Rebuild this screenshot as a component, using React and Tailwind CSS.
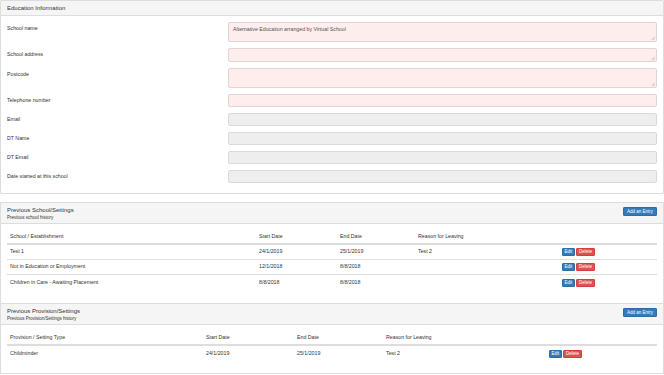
import React from 'react';

const fields = [
    { label: 'School name', h: 'h-[20px]', tone: 'pink', value: 'Alternative Education arranged by Virtual School', grip: true },
    { label: 'School address', h: 'h-[14px]', tone: 'pink', grip: true },
    { label: 'Postcode', h: 'h-[20px]', tone: 'pink', grip: true },
    { label: 'Telephone number', h: 'h-[13px]', tone: 'pink' },
    { label: 'Email', h: 'h-[13px]', tone: 'gray' },
    { label: 'DT Name', h: 'h-[13px]', tone: 'gray' },
    { label: 'DT Email', h: 'h-[13px]', tone: 'gray' },
    { label: 'Date started at this school', h: 'h-[13px]', tone: 'gray' },
];

const schools = [
    { name: 'Test 1', start: '24/1/2019', end: '25/1/2019', reason: 'Test 2' },
    { name: 'Not in Education or Employment', start: '12/1/2018', end: '8/8/2018', reason: '' },
    { name: 'Children in Care - Awaiting Placement', start: '8/8/2018', end: '8/8/2018', reason: '' },
];

const provisions = [
    { name: 'Childminder', start: '24/1/2019', end: '25/1/2019', reason: 'Test 2' },
];

const Grip = () => (
    <svg className="absolute right-[1px] bottom-[1px]" width="4" height="4" viewBox="0 0 4 4">
        <path d="M4 0.5 L0.5 4 M4 2.2 L2.2 4" stroke="#999" strokeWidth="0.5" />
    </svg>
);

const Field = ({ label, h, tone, value, grip }) => (
    <div className="flex items-start">
        <div className="w-[221px] pt-[2px] text-[5.25px] leading-[9px] text-[#333]">{label}</div>
        <div
            className={`relative flex-1 ${h} rounded-[2px] border ${
                tone === 'pink' ? 'bg-[#fdeded] border-[#e6d3d3]' : 'bg-[#eeeeee] border-[#d9d9d9]'
            } px-[4px] pt-[3px] text-[5.25px] leading-[6px] text-[#555]`}
        >
            {value}
            {grip && <Grip />}
        </div>
    </div>
);

const ActionButtons = () => (
    <div className="flex gap-[1px]">
        <span className="h-[8px] w-[13px] rounded-[1px] bg-[#337ab7] border border-[#2e6da4] text-white text-[4.5px] leading-[6px] text-center">Edit</span>
        <span className="h-[8px] w-[19px] rounded-[1px] bg-[#d9534f] border border-[#d43f3a] text-white text-[4.5px] leading-[6px] text-center">Delete</span>
    </div>
);

const SectionHeading = ({ title, subtitle }) => (
    <div className="flex items-start justify-between h-[22px] bg-[#f5f5f5] border-y border-[#ddd] px-[6px] pt-[3px]">
        <div className="text-[#333]">
            <div className="text-[6px] leading-[8px]">{title}</div>
            <div className="text-[4.5px] leading-[7px]">{subtitle}</div>
        </div>
        <span className="mt-[1px] h-[9px] px-[3px] rounded-[1px] bg-[#337ab7] border border-[#2e6da4] text-white text-[4.5px] leading-[7px]">
            Add an Entry
        </span>
    </div>
);

const HistoryTable = ({ cols, headers, rows }) => (
    <div className="px-[6px] pt-[6px] text-[5.25px] text-[#333]">
        <div className={`grid ${cols} h-[15px] items-center border-b-2 border-[#ddd]`}>
            {headers.map((h, i) => (
                <div key={i} className="px-[3px]">{h}</div>
            ))}
        </div>
        {rows.map((r, i) => (
            <div
                key={i}
                className={`grid ${cols} h-[15px] items-center ${i < rows.length - 1 ? 'border-b border-[#ddd]' : ''}`}
            >
                <div className="px-[3px]">{r.name}</div>
                <div className="px-[3px]">{r.start}</div>
                <div className="px-[3px]">{r.end}</div>
                <div className="px-[3px]">{r.reason}</div>
                <div className="px-[3px]">
                    <ActionButtons />
                </div>
            </div>
        ))}
    </div>
);

const App = () => {
    return (
        <div className="w-[664px] h-[375px] bg-white overflow-hidden" style={{ fontFamily: '"Liberation Sans", Arial, sans-serif' }}>
            {/* Education Information */}
            <div className="border border-[#ddd] rounded-[1px]">
                <div className="h-[15px] bg-[#f5f5f5] border-b border-[#ddd] px-[6px] text-[6px] leading-[14px] text-[#333]">
                    Education Information
                </div>
                <div className="flex flex-col gap-[6px] px-[6px] pt-[6px] pb-[10px]">
                    {fields.map((f) => (
                        <Field key={f.label} {...f} />
                    ))}
                </div>
            </div>

            {/* Previous school / provision */}
            <div className="mt-[8px] border-x border-b border-[#ddd] rounded-[1px]">
                <SectionHeading title="Previous School/Settings" subtitle="Previous school history" />
                <HistoryTable
                    cols="grid-cols-[249px_81px_78px_144px_1fr]"
                    headers={['School / Establishment', 'Start Date', 'End Date', 'Reason for Leaving', '']}
                    rows={schools}
                />
                <div className="h-[13px]" />
                <SectionHeading title="Previous Provision/Settings" subtitle="Previous Provision/Settings history" />
                <HistoryTable
                    cols="grid-cols-[196px_91px_89px_163px_1fr]"
                    headers={['Provision / Setting Type', 'Start Date', 'End Date', 'Reason for Leaving', '']}
                    rows={provisions}
                />
                <div className="h-[12px]" />
            </div>
        </div>
    );
};

export default App;
